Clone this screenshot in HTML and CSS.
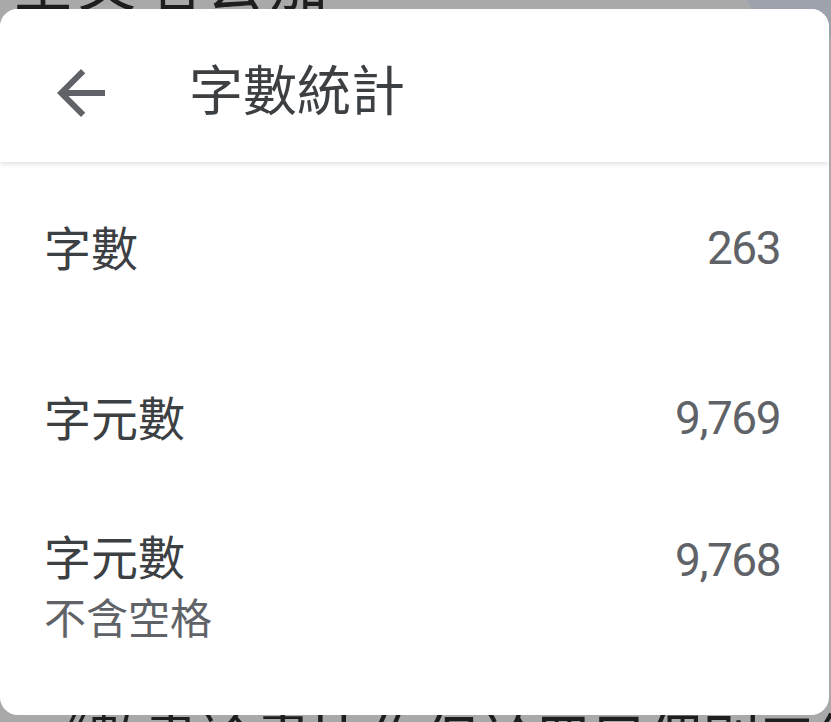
FILE: index.html
```html
<!DOCTYPE html>
<html lang="zh-Hant">
<head>
<meta charset="UTF-8" />
<meta name="viewport" content="width=device-width, initial-scale=1" />
<title>字數統計</title>
<link rel="stylesheet" href="styles.css">
</head>
<body>
<div class="backdrop">
  <div class="backdrop-top">主文名公加</div>
  <div class="backdrop-avatar"></div>
  <div class="backdrop-bottom">《數書論畫比作但於冊目偶別三約期</div>
</div>

<div class="dialog">
  <div class="dialog-header">
    <button class="back-btn" aria-label="返回">
      <svg viewBox="0 0 24 24" width="72" height="72"><path d="M20 11H7.83l5.59-5.59L12 4l-8 8 8 8 1.41-1.41L7.83 13H20v-2z"/></svg>
    </button>
    <h1>字數統計</h1>
  </div>

  <div class="stats">
    <div class="stat-row first">
      <div class="stat-label">字數</div>
      <div class="stat-value">263</div>
    </div>
    <div class="stat-row">
      <div class="stat-label">字元數</div>
      <div class="stat-value">9,769</div>
    </div>
    <div class="stat-row two-line">
      <div>
        <div class="stat-label">字元數</div>
        <div class="stat-sub">不含空格</div>
      </div>
      <div class="stat-value">9,768</div>
    </div>
  </div>
</div>
</body>
</html>
```

FILE: styles.css
```css
html, body {
  margin: 0;
  height: 100%;
  overflow: hidden;
}
body {
  background-color: #a9a9a9;
  font-family: Roboto, "Noto Sans CJK TC", sans-serif;
  position: relative;
  padding-top: 9px;
  box-sizing: border-box;
}
.backdrop-top, .backdrop-bottom {
  position: absolute;
  left: 14px;
  font-family: "Noto Sans CJK TC", sans-serif;
  font-size: 58px;
  line-height: 1;
  color: #1e1e1e;
  white-space: nowrap;
}
.backdrop-top {
  top: -48px;
  letter-spacing: 6px;
}
.backdrop-bottom {
  top: 708px;
  left: 30px;
  letter-spacing: -2px;
}
.backdrop-avatar {
  position: absolute;
  left: 738px;
  top: -110px;
  width: 150px;
  height: 150px;
  border-radius: 50%;
  background-color: #9da2ac;
}
.dialog {
  position: relative;
  width: 829px;
  height: 706px;
  background-color: #ffffff;
  border-radius: 18px;
  overflow: hidden;
}
.dialog-header {
  height: 153px;
  box-sizing: border-box;
  padding: 14px 0 0 45px;
  display: flex;
  align-items: center;
  background-color: #ffffff;
  box-shadow: 0 2px 5px rgba(0,0,0,0.13);
  position: relative;
}
.back-btn {
  border: 0;
  padding: 0;
  margin: 0;
  background: none;
  width: 72px;
  height: 72px;
  display: flex;
}
.back-btn svg {
  fill: #5f6368;
}
.dialog-header h1 {
  margin: 0 0 10px 72px;
  font-family: "Noto Sans CJK TC", sans-serif;
  font-weight: 400;
  font-size: 54px;
  color: #3c4043;
  line-height: 1;
}
.stat-row {
  height: 173px;
  padding: 0 49px 0 44px;
  display: flex;
  justify-content: space-between;
  align-items: center;
}
.stat-row.first {
  height: 167px;
}
.stat-row.two-line {
  align-items: flex-start;
  padding-top: 23px;
  box-sizing: border-box;
}
.stat-label {
  font-family: "Noto Sans CJK TC", sans-serif;
  font-size: 47px;
  line-height: 60px;
  color: #3c4043;
}
.stat-sub {
  font-family: "Noto Sans CJK TC", sans-serif;
  font-size: 42px;
  line-height: 50px;
  margin-top: 6px;
  color: #5f6368;
}
.stat-value {
  font-family: Roboto, sans-serif;
  font-size: 46px;
  line-height: 60px;
  letter-spacing: -1.5px;
  padding-top: 5px;
  color: #5f6368;
}
```
